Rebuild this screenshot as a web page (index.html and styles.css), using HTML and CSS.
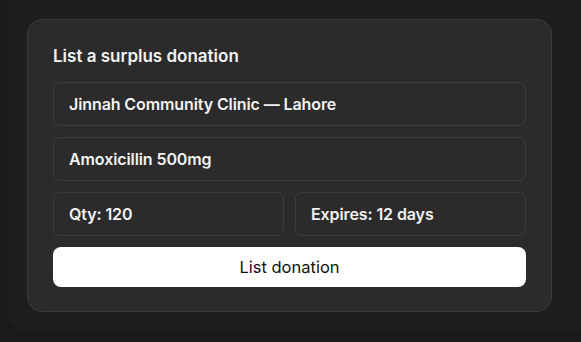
FILE: index.html
```html
<!DOCTYPE html>
<html>
<head>
<meta charset="utf-8">
<link rel="stylesheet" href="styles.css">
</head>
<body>
<div class="panel">
  <form class="card">
    <h2 class="title">List a surplus donation</h2>
    <div class="field">Jinnah Community Clinic — Lahore</div>
    <div class="field">Amoxicillin 500mg</div>
    <div class="row">
      <div class="field">Qty: 120</div>
      <div class="field">Expires: 12 days</div>
    </div>
    <button type="button" class="btn">List donation</button>
  </form>
</div>
</body>
</html>
```
FILE: styles.css
```css
html, body {
  margin: 0;
  padding: 0;
  background: #1a1a1a;
  overflow: hidden;
  font-family: Inter, "Noto Sans", sans-serif;
}
.panel {
  margin-left: 8px;
  height: 331px;
  box-sizing: border-box;
  padding: 19px 0 0 19px;
  background: #1e1e1e;
  border-radius: 0 0 0 18px;
}
.card {
  width: 525px;
  box-sizing: border-box;
  background: #2b2b2b;
  border: 1px solid #3b3b3b;
  border-radius: 15px;
  padding: 24px 25px 24px 25px;
  display: flex;
  flex-direction: column;
  gap: 11px;
}
.title {
  margin: 0 0 3px 0;
  font-size: 17px;
  font-weight: 600;
  color: #f2f2f2;
  line-height: 24px;
  letter-spacing: 0;
}
.field {
  height: 44px;
  box-sizing: border-box;
  border: 1px solid #3c3c3c;
  border-radius: 7px;
  padding: 0 15px;
  display: flex;
  align-items: center;
  font-size: 16px;
  font-weight: 600;
  color: #f2f2f2;
  letter-spacing: -0.1px;
}
.row {
  display: grid;
  grid-template-columns: 1fr 1fr;
  gap: 11px;
}
.btn {
  height: 40px;
  border: none;
  border-radius: 8px;
  background: #ffffff;
  color: #111111;
  font-family: inherit;
  font-size: 16.5px;
  font-weight: 400;
  letter-spacing: 0;
}
```
